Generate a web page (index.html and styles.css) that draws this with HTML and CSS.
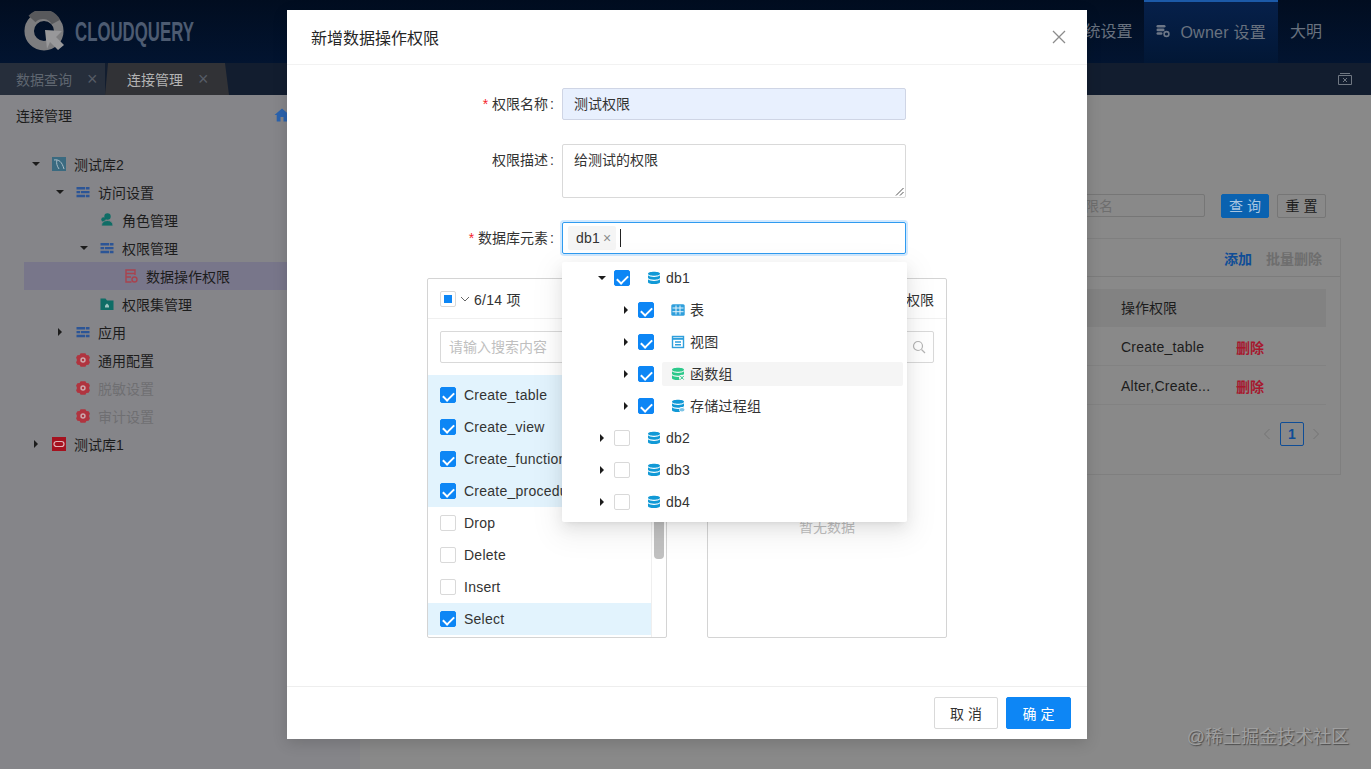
FILE: index.html
```html
<!DOCTYPE html>
<html lang="zh-CN">
<head>
    <meta charset="UTF-8">
    <title>连接管理</title>
    <link rel="stylesheet" href="styles.css">
</head>
<body>

    <svg class="defs" width="0" height="0">
        <symbol id="i-db" viewBox="0 0 14 14">
            <path d="M1 2.800c0-1.200 2.700-2 6-2s6 .8 6 2-2.700 2-6 2-6-.8-6-2z"/>
            <path d="M1 4.300c1 1.200 3.500 1.700 6 1.700s5-.5 6-1.700v2.500c0 1.300-2.700 2-6 2s-6-.7-6-2z"/>
            <path d="M1 8.200c1 1.200 3.500 1.700 6 1.700s5-.5 6-1.700v2.700c0 1.300-2.700 2.100-6 2.100s-6-.8-6-2.100z"/>
        </symbol>
        <symbol id="i-list" viewBox="0 0 14 14">
            <path d="M0.500 2h8.500v2.400h-8.500zM9.800 2h3.700v2.400h-3.700zM0.500 5.900h3.700v2.400h-3.700zM5 5.900h8.500v2.400h-8.500zM0.500 9.800h8.500v2.400h-8.500zM9.800 9.800h3.700v2.400h-3.700z"/>
        </symbol>
        <symbol id="i-gear" viewBox="0 0 14 14">
            <path d="M4.600 0.300h4.800l1 1.700 2.200 0.300 1.300 2.300-0.900 2.400 0.900 2.400-1.300 2.300-2.200 0.300-1 1.700h-4.800l-1-1.700-2.200-0.300-1.300-2.300 0.900-2.400-0.900-2.400 1.300-2.300 2.200-0.300z"/>
            <circle cx="7" cy="7" r="2.700" fill="#cda8ac"/>
            <circle cx="7" cy="7" r="1.200"/>
        </symbol>
    </svg>

    <header class="topbar">
        <div class="logo">
            <svg width="42" height="42" viewBox="0 0 42 42">
                <circle cx="20" cy="20" r="14.800" fill="none" stroke="#7d7d7f" stroke-width="9.500"/>
                <path d="M8 8a14.800 14.800 0 0 1 24 3" fill="none" stroke="#58595c" stroke-width="9.500"/>
                <path d="M21 19l17 1-6 6 8 8-6 5-8-8-3 7z" fill="#98989a"/>
            </svg>
            <span class="logo-text">CLOUDQUERY</span>
        </div>
        <nav class="nav">
            <a class="nav-item">系统设置</a>
            <a class="nav-item active">
                <svg width="14" height="14" viewBox="0 0 14 14" fill="#6d7787">
                    <rect x="0.500" y="1" width="9" height="2.600" rx="1.300"/>
                    <rect x="0.500" y="4.600" width="8" height="2.600" rx="1.300"/>
                    <rect x="0.500" y="8.200" width="6" height="2.600" rx="1.300"/>
                    <circle cx="10.500" cy="10" r="2.400" fill="none" stroke="#6d7787" stroke-width="1.600"/>
                </svg>
                Owner 设置
            </a>
            <a class="nav-item">大明</a>
        </nav>
    </header>

    <div class="tabs">
        <div class="tab">数据查询<span class="tab-x">×</span></div>
        <div class="tab current">连接管理<span class="tab-x">×</span></div>
        <svg class="tabs-close" width="14" height="14" viewBox="0 0 14 14" fill="none" stroke="#6f7782">
            <path d="M0.500 3.500h13v9h-13zM2 1.500h10M5 6l4 4M9 6l-4 4"/>
        </svg>
    </div>

    <main class="main">
        <aside class="sidebar">
            <div class="side-title">
                连接管理
                <svg class="home" width="16" height="14" viewBox="0 0 16 14" fill="#2a62ad">
                    <path d="M8 0.500L0.500 7h2.200v6.500h3.800V9h3v4.500h3.800V7h2.200z"/>
                </svg>
            </div>
            <ul class="tree">
                <li class="node">
                    <i class="caret down"></i>
                    <svg class="icon" viewBox="0 0 14 14"><rect width="14" height="14" fill="#3a6a80"/><path d="M2 3c5-1 8 2 10 9M5 3c-1 3 0 6 2 9" fill="none" stroke="#a9bcc6"/></svg>
                    测试库2
                </li>
                <li class="node lv1"><i class="caret down"></i><svg class="icon list"><use href="#i-list"/></svg>访问设置</li>
                <li class="node lv2">
                    <i class="caret none"></i>
                    <svg class="icon" viewBox="0 0 14 14" fill="#0f6d66"><circle cx="7.500" cy="3.500" r="3.200"/><circle cx="3.500" cy="6.500" r="2.200"/><path d="M1.500 13c0-3.500 2.200-5.500 5.800-5.500s5.700 2 5.700 5.500z" stroke="#858589" stroke-width="0.800"/></svg>
                    角色管理
                </li>
                <li class="node lv2"><i class="caret down"></i><svg class="icon list"><use href="#i-list"/></svg>权限管理</li>
                <li class="node lv3 selected">
                    <i class="caret none"></i>
                    <svg class="icon" viewBox="0 0 14 14" fill="none" stroke="#a8434f" stroke-width="1.400"><path d="M7.500 13H2V1h9v5M2 4.500h9M2 8h5"/><circle cx="10.500" cy="10.500" r="2.500"/></svg>
                    数据操作权限
                </li>
                <li class="node lv2">
                    <i class="caret none"></i>
                    <svg class="icon" viewBox="0 0 14 14" fill="#0f6d66"><path d="M0.500 1.500h5l1.500 2h6.500v9.500H0.500z"/><path d="M7 6.500L5 8.500v2h4v-2z" fill="#9fc4c0"/></svg>
                    权限集管理
                </li>
                <li class="node lv1"><i class="caret right"></i><svg class="icon list"><use href="#i-list"/></svg>应用</li>
                <li class="node lv1"><i class="caret none"></i><svg class="icon gear"><use href="#i-gear"/></svg>通用配置</li>
                <li class="node lv1 disabled"><i class="caret none"></i><svg class="icon gear"><use href="#i-gear"/></svg>脱敏设置</li>
                <li class="node lv1 disabled"><i class="caret none"></i><svg class="icon gear"><use href="#i-gear"/></svg>审计设置</li>
                <li class="node">
                    <i class="caret right"></i>
                    <svg class="icon" viewBox="0 0 14 14"><rect width="14" height="14" fill="#a5121f"/><rect x="2" y="4.500" width="10" height="5" rx="2.500" fill="none" stroke="#e0b4b8" stroke-width="1.200"/></svg>
                    测试库1
                </li>
            </ul>
        </aside>

        <section class="content">
            <div class="search-row">
                <div class="search-input">请输入权限名</div>
                <a class="btn-small primary">查 询</a>
                <a class="btn-small">重 置</a>
            </div>
            <div class="card">
                <div class="card-tools">
                    <a class="link-add">添加</a>
                    <a class="link-batch">批量删除</a>
                </div>
                <div class="table">
                    <div class="row head"><span></span><span>操作权限</span><span></span></div>
                    <div class="row"><span></span><span class="latin">Create_table</span><a class="link-del">删除</a></div>
                    <div class="row"><span></span><span class="latin">Alter,Create...</span><a class="link-del">删除</a></div>
                </div>
                <div class="pager">
                    <svg width="10" height="12" viewBox="0 0 10 12" fill="none" stroke="#747474"><path d="M7.500 1L2.500 6l5 5"/></svg>
                    <span class="page">1</span>
                    <svg width="10" height="12" viewBox="0 0 10 12" fill="none" stroke="#747474"><path d="M2.500 1l5 5-5 5"/></svg>
                </div>
            </div>
        </section>
    </main>

    <div class="modal">
        <div class="modal-head">
            <h2>新增数据操作权限</h2>
            <svg width="14" height="14" viewBox="0 0 14 14" stroke="#8c8c8c" stroke-width="1.300"><path d="M1 1l12 12M13 1L1 13"/></svg>
        </div>

        <div class="modal-body">
            <div class="form-row">
                <label><em>*</em>权限名称</label>
                <div class="field filled">测试权限</div>
            </div>
            <div class="form-row">
                <label>权限描述</label>
                <div class="field area">
                    给测试的权限
                    <svg class="grip" width="9" height="9" viewBox="0 0 9 9" stroke="#555"><path d="M1 8.500L8.500 1M5 8.500L8.500 5"/></svg>
                </div>
            </div>
            <div class="form-row">
                <label><em>*</em>数据库元素</label>
                <div class="field focused">
                    <span class="tag">db1<span class="tag-x">×</span></span>
                    <span class="cursor"></span>

                    <div class="dropdown">
                        <div class="dd-row">
                            <i class="caret down"></i><i class="check on"></i>
                            <div class="dd-node"><svg class="icon db"><use href="#i-db"/></svg>db1</div>
                        </div>
                        <div class="dd-row sub">
                            <i class="caret right"></i><i class="check on"></i>
                            <div class="dd-node">
                                <svg class="icon" viewBox="0 0 14 14"><rect x="0.300" y="1.300" width="13.400" height="11.400" rx="1.500" fill="#2f9fdc"/><path d="M1.500 5h11M1.500 8.700h11M5 2.500v9M9 2.500v9" stroke="#e4f3fb"/></svg>
                                表
                            </div>
                        </div>
                        <div class="dd-row sub">
                            <i class="caret right"></i><i class="check on"></i>
                            <div class="dd-node">
                                <svg class="icon" viewBox="0 0 14 14" fill="none" stroke="#2f9fdc" stroke-width="1.400"><rect x="1.500" y="1.500" width="11" height="11"/><path d="M1.500 3.800h11" stroke-width="2"/><path d="M4 7h6M4 9.800h6"/></svg>
                                视图
                            </div>
                        </div>
                        <div class="dd-row sub">
                            <i class="caret right"></i><i class="check on"></i>
                            <div class="dd-node hover">
                                <svg class="icon db-fn" viewBox="0 0 14 14"><use href="#i-db" width="14" height="14"/><circle cx="11" cy="10.800" r="3" fill="#f5f5f5"/><path d="M9.300 9l3.400 3.600M12.700 9l-3.400 3.600" stroke="#2cc98b"/></svg>
                                函数组
                            </div>
                        </div>
                        <div class="dd-row sub">
                            <i class="caret right"></i><i class="check on"></i>
                            <div class="dd-node">
                                <svg class="icon db-proc" viewBox="0 0 14 14"><use href="#i-db" width="14" height="14"/><circle cx="11" cy="10.800" r="2.800" fill="#fff"/><ellipse cx="11" cy="10.800" rx="2.500" ry="1.700" fill="#7cc4e6"/></svg>
                                存储过程组
                            </div>
                        </div>
                        <div class="dd-row">
                            <i class="caret right"></i><i class="check"></i>
                            <div class="dd-node"><svg class="icon db"><use href="#i-db"/></svg>db2</div>
                        </div>
                        <div class="dd-row">
                            <i class="caret right"></i><i class="check"></i>
                            <div class="dd-node"><svg class="icon db"><use href="#i-db"/></svg>db3</div>
                        </div>
                        <div class="dd-row">
                            <i class="caret right"></i><i class="check"></i>
                            <div class="dd-node"><svg class="icon db"><use href="#i-db"/></svg>db4</div>
                        </div>
                    </div>
                </div>
            </div>

            <div class="transfer">
                <div class="box">
                    <div class="box-head">
                        <i class="check part"></i>
                        <svg width="10" height="10" viewBox="0 0 10 10" fill="none" stroke="#666"><path d="M1 3l4 4 4-4"/></svg>
                        <span class="latin">6/14 项</span>
                    </div>
                    <div class="box-search"><div class="box-input">请输入搜索内容</div></div>
                    <div class="box-list">
                        <ul>
                            <li class="picked"><i class="check on"></i>Create_table</li>
                            <li class="picked"><i class="check on"></i>Create_view</li>
                            <li class="picked"><i class="check on"></i>Create_function</li>
                            <li class="picked"><i class="check on"></i>Create_procedure</li>
                            <li><i class="check"></i>Drop</li>
                            <li><i class="check"></i>Delete</li>
                            <li><i class="check"></i>Insert</li>
                            <li class="picked"><i class="check on"></i>Select</li>
                        </ul>
                        <div class="scroll"><div class="thumb"></div></div>
                    </div>
                </div>
                <div class="box">
                    <div class="box-head right"><span>数据操作权限</span></div>
                    <div class="box-search">
                        <div class="box-input end">
                            <svg width="14" height="14" viewBox="0 0 14 14" fill="none" stroke="#b5b5b5" stroke-width="1.200"><circle cx="6" cy="6" r="4.500"/><path d="M9.500 9.500l3.500 3.500"/></svg>
                        </div>
                    </div>
                    <div class="empty">暂无数据</div>
                </div>
            </div>
        </div>

        <div class="modal-foot">
            <button class="btn">取 消</button>
            <button class="btn ok">确 定</button>
        </div>
    </div>

    <div class="watermark">@稀土掘金技术社区</div>

</body>
</html>
```

FILE: styles.css
```css
* {
    margin: 0;
    padding: 0;
    box-sizing: border-box;
}

body {
    width: 1371px;
    height: 769px;
    overflow: hidden;
    position: relative;
    display: flex;
    flex-direction: column;
    font-family: "Liberation Sans", "Noto Sans CJK SC", sans-serif;
    font-size: 14px;
    color: #1c1c1c;
    background-color: #898989;
}

ul {
    list-style: none;
}

.defs {
    position: absolute;
}

.latin {
    letter-spacing: 0.25px;
}

/* top bar */
.topbar {
    height: 63px;
    flex-shrink: 0;
    display: flex;
    justify-content: space-between;
    background: linear-gradient(#010d20, #021430);
}

.logo {
    display: flex;
    align-items: center;
    gap: 9px;
    padding-left: 24px;
}

.logo-text {
    font-size: 28px;
    font-weight: bold;
    color: #4d5b71;
    transform: scaleX(0.6);
    transform-origin: left center;
}

.nav {
    display: flex;
    margin-right: 37px;
}

.nav-item {
    display: flex;
    align-items: center;
    gap: 10px;
    padding: 0 12px 4px;
    font-size: 16px;
    color: #69727f;
}

.nav-item.active {
    letter-spacing: 0.25px;
    border-top: 2px solid #1c5aa8;
    background: linear-gradient(#06204a, #021735);
}

/* tabs */
.tabs {
    height: 32px;
    flex-shrink: 0;
    display: flex;
    position: relative;
    background-color: #121d2f;
}

.tab {
    width: 105px;
    padding-left: 16px;
    line-height: 32px;
    color: #5f6670;
    background-color: #262e3b;
}

.tab-x {
    margin-left: 15px;
    font-size: 18px;
    font-weight: 300;
    color: #565c66;
}

.tab.current {
    width: 124px;
    padding-left: 22px;
    color: #b4b4b4;
    background-color: #313236;
    clip-path: polygon(3px 0, 120px 0, 124px 100%, 0 100%);
}

.tabs-close {
    position: absolute;
    right: 19px;
    top: 9px;
}

/* page under the mask */
.main {
    flex: 1;
    display: flex;
}

.sidebar {
    width: 360px;
    flex-shrink: 0;
    background-color: #858589;
}

.side-title {
    display: flex;
    justify-content: space-between;
    align-items: center;
    height: 41px;
    padding: 0 70px 1px 16px;
    margin-bottom: 14px;
}

.node {
    display: flex;
    align-items: center;
    height: 28px;
    margin-left: 24px;
}

.node.lv1 {
    padding-left: 24px;
}

.node.lv2 {
    padding-left: 48px;
}

.node.lv3 {
    padding-left: 72px;
}

.node.selected {
    background-color: #78768a;
}

.node.disabled {
    color: #6f6f72;
}

.node .icon {
    margin: 0 8px 0 4px;
}

.icon {
    width: 14px;
    height: 14px;
    flex-shrink: 0;
}

.icon.list {
    fill: #2c5596;
}

.icon.gear {
    fill: #b0343f;
}

.icon.db,
.icon.db-proc {
    fill: #1199d6;
}

.icon.db-fn {
    fill: #2cc98b;
}

.caret {
    width: 24px;
    height: 10px;
    flex-shrink: 0;
    position: relative;
    display: block;
}

.caret::after {
    content: "";
    position: absolute;
    left: 8px;
    top: 2px;
    border-style: solid;
    border-color: transparent;
}

.caret.down::after {
    top: 3px;
    border-width: 4px 4px 0;
    border-top-color: #1c1c1c;
}

.caret.right::after {
    left: 10px;
    top: 1px;
    border-width: 4px 0 4px 4px;
    border-left-color: #1c1c1c;
}

.caret.none::after {
    display: none;
}

.content {
    flex: 1;
    padding-top: 99px;
}

.search-row {
    display: flex;
    justify-content: flex-end;
    gap: 8px;
    padding-right: 45px;
}

.search-input {
    width: 189px;
    height: 23px;
    margin-right: 8px;
    padding-left: 12px;
    line-height: 22px;
    color: #6e6e6e;
    border: 1px solid #767676;
    border-radius: 2px;
}

.btn-small {
    width: 49px;
    height: 24px;
    line-height: 22px;
    text-align: center;
    border: 1px solid #767676;
    border-radius: 2px;
}

.btn-small.primary {
    width: 48px;
    color: #a9c6e2;
    border-color: #0a62b0;
    background-color: #0a62b0;
}

.card {
    margin: 20px 30px 0 16px;
    height: 237px;
    border: 1px solid #7f7f7f;
}

.card-tools {
    height: 38px;
    display: flex;
    justify-content: flex-end;
    align-items: center;
    gap: 14px;
    padding-right: 18px;
    border-bottom: 1px solid #7c7c7c;
    font-weight: bold;
}

.link-add {
    color: #0f4d96;
}

.link-batch {
    color: #6e6e6e;
}

.table {
    margin: 12px 14px 0 0;
}

.row {
    display: grid;
    grid-template-columns: 1fr 115px 90px;
    align-items: center;
    height: 39px;
    padding-top: 1px;
    border-bottom: 1px solid #828282;
}

.row.head {
    height: 38px;
    padding: 0 0 2px;
    border: 0;
    background-color: #828282;
}

.link-del {
    color: #a6182e;
    font-weight: bold;
}

.pager {
    display: flex;
    justify-content: flex-end;
    align-items: center;
    gap: 8px;
    padding-right: 19px;
    margin-top: 17px;
}

.page {
    width: 24px;
    height: 24px;
    margin-right: -1px;
    line-height: 22px;
    text-align: center;
    font-weight: bold;
    color: #0f4d96;
    border: 1px solid #0f4d96;
    border-radius: 2px;
}

/* modal */
.modal {
    position: absolute;
    left: 287px;
    top: 10px;
    width: 800px;
    height: 729px;
    display: flex;
    flex-direction: column;
    background-color: #fff;
    box-shadow: 0 4px 14px rgba(0, 0, 0, 0.15);
}

.modal-head {
    height: 55px;
    flex-shrink: 0;
    display: flex;
    justify-content: space-between;
    align-items: center;
    padding: 0 21px 0 24px;
    border-bottom: 1px solid #f2f2f2;
}

.modal-head h2 {
    font-size: 16px;
    font-weight: normal;
    color: #262626;
}

.modal-body {
    flex: 1;
    padding: 23px 24px 0;
}

.form-row {
    display: flex;
    margin-bottom: 24px;
}

.form-row label {
    width: 243px;
    height: 32px;
    margin-right: 8px;
    line-height: 32px;
    text-align: right;
    color: #333;
}

.form-row label::after {
    content: ":";
    margin-left: 2px;
}

.form-row em {
    margin-right: 4px;
    font-style: normal;
    color: #f5222d;
}

.field {
    width: 344px;
    height: 32px;
    padding: 0 11px;
    line-height: 30px;
    position: relative;
    display: flex;
    align-items: center;
    border: 1px solid #d9d9d9;
    border-radius: 2px;
    color: #333;
}

.field.filled {
    border-color: #cfd5e5;
    background-color: #e8f0fe;
}

.field.area {
    height: 54px;
    align-items: flex-start;
}

.grip {
    position: absolute;
    right: 1px;
    bottom: 1px;
}

.field.focused {
    padding-left: 5px;
    border-color: #2f9bf0;
    box-shadow: 0 0 0 2px rgba(24, 144, 255, 0.2);
}

.tag {
    height: 24px;
    line-height: 24px;
    padding: 0 4px 0 8px;
    letter-spacing: 0.25px;
    background-color: #f5f5f5;
    border-radius: 2px;
}

.tag-x {
    margin-left: 3px;
    font-size: 14px;
    color: #8c8c8c;
}

.cursor {
    width: 1px;
    height: 18px;
    margin-left: 4px;
    background-color: #222;
}

.dropdown {
    position: absolute;
    left: -1px;
    top: 39px;
    width: 345px;
    height: 260px;
    z-index: 2;
    background-color: #fff;
    border-radius: 2px;
    box-shadow: 0 3px 6px -4px rgba(0, 0, 0, 0.12), 0 6px 16px rgba(0, 0, 0, 0.08), 0 9px 28px 8px rgba(0, 0, 0, 0.05);
}

.dd-row {
    display: flex;
    align-items: center;
    height: 32px;
    padding: 0 4px 0 28px;
}

.dd-row.sub {
    padding-left: 52px;
}

.dd-node {
    flex: 1;
    height: 24px;
    display: flex;
    align-items: center;
    gap: 5px;
    margin-left: 8px;
    padding-left: 9px;
    line-height: 24px;
    letter-spacing: 0.25px;
    border-radius: 2px;
    color: #333;
}

.dd-node.hover {
    background-color: #f5f5f5;
}

.check {
    width: 16px;
    height: 16px;
    flex-shrink: 0;
    position: relative;
    display: block;
    border: 1px solid #d9d9d9;
    border-radius: 2px;
    background-color: #fff;
}

.check.on {
    border-color: #0d86f5;
    background-color: #0d86f5;
}

.check.on::after {
    content: "";
    position: absolute;
    left: 4px;
    top: 1.500px;
    width: 5px;
    height: 9px;
    border: solid #fff;
    border-width: 0 2px 2px 0;
    transform: rotate(45deg);
}

.check.part::after {
    content: "";
    position: absolute;
    left: 3px;
    top: 3px;
    width: 8px;
    height: 8px;
    background-color: #0d86f5;
}

/* transfer */
.transfer {
    display: flex;
    gap: 40px;
    margin-left: 116px;
}

.box {
    width: 240px;
    height: 360px;
    border: 1px solid #d4d4d4;
    border-radius: 2px;
    display: flex;
    flex-direction: column;
}

.box-head {
    height: 40px;
    flex-shrink: 0;
    display: flex;
    align-items: center;
    gap: 4px;
    padding: 0 12px;
    border-bottom: 1px solid #f0f0f0;
    color: #333;
}

.box-head.right {
    justify-content: flex-end;
}

.box-search {
    height: 56px;
    flex-shrink: 0;
    padding: 12px;
}

.box-input {
    height: 32px;
    padding-left: 8px;
    line-height: 30px;
    color: #bfbfbf;
    border: 1px solid #d9d9d9;
    border-radius: 2px;
}

.box-input.end {
    display: flex;
    justify-content: flex-end;
    align-items: center;
    padding-right: 7px;
}

.box-list {
    flex: 1;
    display: flex;
}

.box-list ul {
    flex: 1;
}

.box-list li {
    display: flex;
    align-items: center;
    gap: 8px;
    height: 32px;
    padding-left: 12px;
    letter-spacing: 0.25px;
    color: #333;
}

.box-list li:first-child {
    height: 36px;
    padding-top: 4px;
}

.box-list li.picked {
    background-color: #e2f3fd;
}

.scroll {
    width: 15px;
    padding: 92px 2px 0;
    border-left: 1px solid #efefef;
}

.thumb {
    height: 92px;
    background-color: #c1c1c1;
    border-radius: 4px;
}

.empty {
    margin-top: 141px;
    text-align: center;
    color: #bfbfbf;
}

.modal-foot {
    height: 53px;
    flex-shrink: 0;
    display: flex;
    justify-content: flex-end;
    gap: 8px;
    padding: 10px 16px;
    border-top: 1px solid #eee;
}

.btn {
    width: 64px;
    height: 32px;
    font-family: inherit;
    font-size: 14px;
    color: #333;
    background-color: #fff;
    border: 1px solid #d9d9d9;
    border-radius: 2px;
}

.btn.ok {
    width: 65px;
    color: #fff;
    background-color: #0d86f5;
    border-color: #0d86f5;
}

.watermark {
    position: absolute;
    right: 22px;
    top: 722px;
    font-size: 18px;
    color: #9f9f9f;
    text-shadow: 1px 1px 1px #4c4c4c;
}
```
